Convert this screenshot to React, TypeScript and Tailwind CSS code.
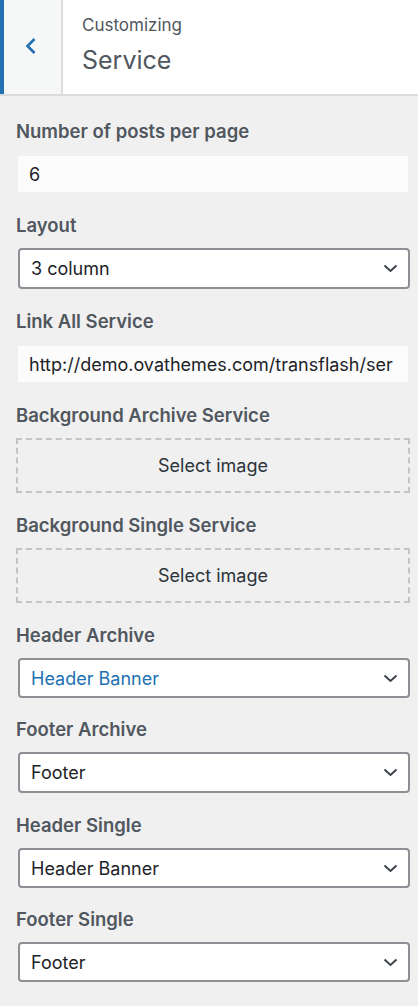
import React from "react";

const font = { fontFamily: 'Inter, "Liberation Sans", Arial, sans-serif' };

function Chevron() {
  return (
    <svg width="15" height="9" viewBox="0 0 15 9" className="shrink-0">
      <path d="M1.5 1.5 L7.5 7 L13.5 1.5" fill="none" stroke="#3c434a" strokeWidth="2" />
    </svg>
  );
}

function Label({ children }: { children: React.ReactNode }) {
  return (
    <div className="h-[20px] leading-[20px] text-[18.5px] font-semibold text-[#50575e] whitespace-nowrap">
      {children}
    </div>
  );
}

function TextInput({ value }: { value: string }) {
  return (
    <div className="mt-[15px] ml-[2px] mr-[2px] h-[36px] bg-[#fcfcfd] flex items-center pl-[11px] overflow-hidden text-[18px] text-[#1d2327] whitespace-nowrap">
      {value}
    </div>
  );
}

function Select({ value, blue, h = 40 }: { value: string; blue?: boolean; h?: number }) {
  return (
    <div
      className={`mt-[13px] ml-[2px] bg-white border-2 border-[#8c8f94] rounded-[4px] flex items-center justify-between pl-[11px] pr-[10px] text-[18px] ${
        blue ? "text-[#2271b1]" : "text-[#1d2327]"
      } ${h === 41 ? "h-[41px]" : "h-[40px]"}`}
    >
      <span>{value}</span>
      <Chevron />
    </div>
  );
}

function ImageBox() {
  return (
    <div className="mt-[13px] h-[55px] border-2 border-dashed border-[#c3c4c7] flex items-center justify-center text-[18px] text-[#2c3338]">
      Select image
    </div>
  );
}

export default function App() {
  return (
    <div className="w-[418px] min-h-[1006px] bg-[#f0f0f1]" style={font}>
      <div className="h-[96px] bg-white border-b-2 border-[#dcdcde] flex">
        <div className="w-[4px] bg-[#2271b1]" />
        <div className="w-[59px] bg-[#f6f7f7] border-r-2 border-[#dcdcde] flex items-center justify-center">
          <svg width="14" height="18" viewBox="0 0 14 18" className="ml-[-4px] mt-[-2px]">
            <path d="M10.5 2 L3.5 9 L10.5 16" fill="none" stroke="#2271b1" strokeWidth="2.6" />
          </svg>
        </div>
        <div className="pl-[19px] pt-[15px]">
          <div className="text-[17px] leading-[20px] text-[#50575e]">Customizing</div>
          <div className="text-[25px] leading-[30px] mt-[10px] text-[#50575e]">Service</div>
        </div>
      </div>
      <div className="pl-[16px] pr-[8px] pt-[25px]">
        <div className="mb-[23px]">
          <Label>Number of posts per page</Label>
          <TextInput value="6" />
        </div>
        <div className="mb-[22px]">
          <Label>Layout</Label>
          <Select value="3 column" h={41} />
        </div>
        <div className="mb-[23px]">
          <Label>Link All Service</Label>
          <TextInput value="http://demo.ovathemes.com/transflash/ser" />
        </div>
        <div className="mb-[22px]">
          <Label>Background Archive Service</Label>
          <ImageBox />
        </div>
        <div className="mb-[22px]">
          <Label>Background Single Service</Label>
          <ImageBox />
        </div>
        <div className="mb-[21px]">
          <Label>Header Archive</Label>
          <Select value="Header Banner" blue />
        </div>
        <div className="mb-[22px]">
          <Label>Footer Archive</Label>
          <Select value="Footer" h={41} />
        </div>
        <div className="mb-[21px]">
          <Label>Header Single</Label>
          <Select value="Header Banner" />
        </div>
        <div>
          <Label>Footer Single</Label>
          <Select value="Footer" />
        </div>
      </div>
    </div>
  );
}
